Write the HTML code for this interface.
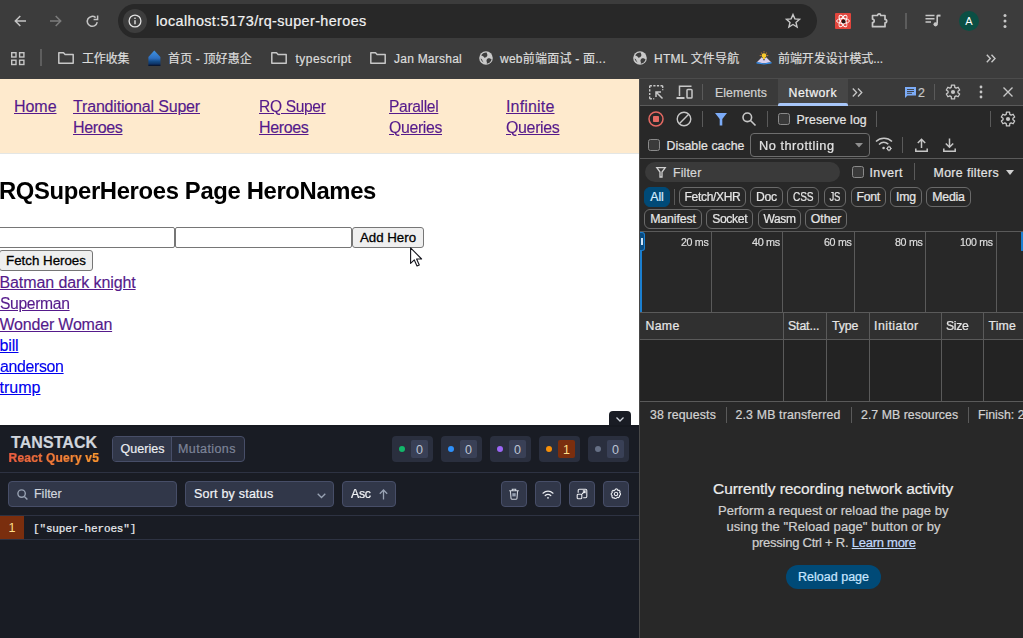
<!DOCTYPE html>
<html lang="en">
<head>
<meta charset="utf-8">
<title>rq-super-heroes</title>
<style>
*{box-sizing:border-box;margin:0;padding:0}
html,body{width:1023px;height:638px;overflow:hidden;background:#282828}
body{position:relative;font-family:"Liberation Sans","Noto Sans CJK SC",sans-serif;color:#e3e3e3}
.abs{position:absolute}
.t{position:absolute;white-space:nowrap;display:block}
svg{display:block;overflow:visible}

/* ---------- browser chrome ---------- */
#chrome{position:absolute;left:0;top:0;width:1023px;height:79px;background:#3c3c3c;z-index:3}
#urlpill{position:absolute;left:118px;top:4px;width:699px;height:34px;border-radius:17px;background:#282828}
#infocirc{position:absolute;left:5px;top:5px;width:24px;height:24px;border-radius:12px;background:#3d3d3d}
#url{left:38px;top:7px;font-size:14.4px;line-height:20px;color:#f2f2f2}
#avatar{position:absolute;left:959px;top:11px;width:20px;height:20px;border-radius:10px;background:#0b4f44;color:#fff;font-size:11px;line-height:20px;text-align:center}
.bm{font-size:12px;line-height:16px;top:51px;color:#dcdcdc;font-family:"Liberation Sans","Noto Sans CJK SC",sans-serif}

/* ---------- page ---------- */
#page{position:absolute;left:0;top:78px;width:639px;height:560px;background:#fff;color:#000;overflow:hidden}
#nav{position:absolute;left:0;top:0;width:639px;height:76px;background:#feeacd;border-bottom:1px solid #e4e6e4}
#nav a{position:absolute;font-size:16px;line-height:21px;color:#551a8b;text-decoration:underline;white-space:nowrap}
h2{position:absolute;left:-1px;top:97px;font-size:24px;line-height:32px;font-weight:bold;white-space:nowrap;color:#000}
.inp{position:absolute;top:149px;height:21px;border:1px solid #767676;border-radius:2px;background:#fff}
.btn{position:absolute;height:21px;border:1px solid #767676;border-radius:3px;background:#efefef;color:#000;font-size:13.3px;line-height:19px;text-align:center;white-space:nowrap;-webkit-text-stroke:0.3px #000}
#list a{position:absolute;left:-0.5px;font-size:16px;line-height:21px;text-decoration:underline;white-space:nowrap}
.v{color:#551a8b}.u{color:#0000ee}

/* ---------- tanstack ---------- */
#ts{position:absolute;left:0;top:425px;width:639px;height:213px;background:#191c24;border-top:2px solid #161920;font-family:"Liberation Sans",sans-serif}
#tsclose{position:absolute;left:609px;top:411px;width:22px;height:15px;background:#191c24;border-radius:4px 4px 0 0}

/* ---------- devtools ---------- */
#dt{position:absolute;left:640px;top:78px;width:383px;height:560px;background:#282828;color:#e3e3e3;font-size:12px;overflow:hidden}

#dt .sep{position:absolute;width:1px;background:#5a5a5a}
#dt .hl{position:absolute;left:0;width:383px;height:1px;background:#5a5a5a}
#dttabs{position:absolute;left:0;top:0;width:383px;height:27px;background:#3a3a3a}
#nettab{position:absolute;left:138px;top:1px;width:70px;height:27px;background:#464646;z-index:2}
#nettab:after{content:"";position:absolute;left:0;bottom:0;width:70px;height:3px;background:#a8c7fa;border-radius:2px 2px 0 0}
.dtt{font-size:12.3px;line-height:16px;color:#e3e3e3;margin-top:1px}
.cb{position:absolute;width:12px;height:12px;border:1.3px solid #8a8a8a;border-radius:2.5px;background:#3a3a3a}
.chip{position:absolute;height:20px;border:1px solid #6a6a6a;border-radius:6px;font-size:12.3px;line-height:19px;color:#e6e6e6;text-align:center;white-space:nowrap}
.chip span{display:inline-block}
.chip.on{background:#004a77;border-color:#004a77;color:#d6ecff}
.tl{font-size:11.3px;line-height:14px;color:#dedede;top:157px}
.gl{position:absolute;top:154px;width:1px;height:80px;background:#5a5a5a}
.th{font-size:12.3px;line-height:16px;color:#e6e6e6;top:240px}
.cd{position:absolute;top:235px;width:1px;height:88px;background:#5a5a5a}
.sb{font-size:12.3px;line-height:16px;color:#d2d2d2;top:329px}
.es{font-size:13px;line-height:16px;color:#cfcfcf}

#ts .hl{position:absolute;left:0;width:639px;height:1px;background:#2d3242}
.tsbox{position:absolute;background:#313749;border:1px solid #474e68;border-radius:4px}
.tstx{font-size:12.300px;line-height:16px;color:#d0d5dd}
.badge{position:absolute;top:9px;width:41px;height:26px;border-radius:4px;background:#2a2f3e}
.badge i{position:absolute;left:7px;top:10px;width:6px;height:6px;border-radius:50%}
.badge b{position:absolute;left:19px;top:4px;width:17px;height:18px;border-radius:2px;background:#394056;color:#bcc4d4;font-weight:normal;font-size:12.5px;line-height:20px;text-align:center}
.abtn{position:absolute;top:54px;width:26px;height:26px;background:#313749;border:1px solid #474e68;border-radius:4px}
.abtn svg{position:absolute;left:6px;top:6px}
/* weight */
#dt .t,#dt .chip,#reload{-webkit-text-stroke:0.22px currentColor}
#ts .t{-webkit-text-stroke:0.2px currentColor}
#tsR,#tsT,#tsK{-webkit-text-stroke:0}
.bm,#url{-webkit-text-stroke:0.2px currentColor}
#nav a,#list a{-webkit-text-stroke:0.15px currentColor}
</style>
<style id="fit">
#url{letter-spacing:0.380px}
#n1{letter-spacing:-0.047px}
#n2a{letter-spacing:-0.175px}
#n2b{letter-spacing:-0.346px}
#n3a{letter-spacing:-0.350px;transform:scaleX(0.9731);transform-origin:left center}
#n3b{letter-spacing:-0.346px}
#n4a{letter-spacing:-0.350px;transform:scaleX(0.9751);transform-origin:left center}
#n4b{letter-spacing:-0.350px;transform:scaleX(0.9892);transform-origin:left center}
#n5a{letter-spacing:0.170px}
#n5b{letter-spacing:-0.350px;transform:scaleX(0.9985);transform-origin:left center}
#h2{letter-spacing:-0.350px;transform:scaleX(0.9929);transform-origin:left center}
#l1{letter-spacing:-0.098px}
#l2{letter-spacing:-0.350px;transform:scaleX(0.9799);transform-origin:left center}
#l3{letter-spacing:-0.201px}
#l4{letter-spacing:-0.141px}
#l5{letter-spacing:-0.350px;transform:scaleX(0.9950);transform-origin:left center}
#l6{letter-spacing:0.019px}
#bm1{letter-spacing:-0.129px}
#bm2{letter-spacing:0.148px}
#bm3{letter-spacing:0.484px}
#bm4{letter-spacing:0.239px}
#bm5{letter-spacing:0.237px}
#bm6{letter-spacing:0.215px}
#bm7{letter-spacing:-0.092px}
#dElements{letter-spacing:0.092px}
#dNetwork{letter-spacing:0.499px}
#dPreserve{letter-spacing:0.104px}
#dDisable{letter-spacing:0.058px}
#dThrottle{letter-spacing:0.500px;transform:scaleX(1.0369);transform-origin:left center}
#dFilter{letter-spacing:0.179px}
#dInvert{letter-spacing:0.456px}
#dMore{letter-spacing:0.391px}
#d2{letter-spacing:-0.244px}
#c0{letter-spacing:-0.124px}
#c1{letter-spacing:-0.350px;transform:scaleX(0.9809);transform-origin:center center}
#c2{letter-spacing:-0.350px;transform:scaleX(0.9892);transform-origin:center center}
#c3{letter-spacing:-0.350px;transform:scaleX(0.8248);transform-origin:center center}
#c4{letter-spacing:-0.350px;transform:scaleX(0.7760);transform-origin:center center}
#c5{letter-spacing:-0.252px}
#c6{letter-spacing:-0.167px}
#c7{letter-spacing:-0.240px}
#c8{letter-spacing:-0.098px}
#c9{letter-spacing:-0.350px;transform:scaleX(0.9917);transform-origin:center center}
#c10{letter-spacing:-0.350px;transform:scaleX(0.9760);transform-origin:center center}
#c11{letter-spacing:-0.093px}
#t20{letter-spacing:-0.350px;transform:scaleX(0.9443);transform-origin:left center}
#t40{letter-spacing:-0.350px;transform:scaleX(0.9616);transform-origin:left center}
#t60{letter-spacing:-0.350px;transform:scaleX(0.9478);transform-origin:left center}
#t80{letter-spacing:-0.350px;transform:scaleX(0.9478);transform-origin:left center}
#t100{letter-spacing:-0.350px;transform:scaleX(0.9328);transform-origin:left center}
#s1{letter-spacing:0.158px}
#s2{letter-spacing:0.175px}
#s3{letter-spacing:0.045px}
#eh{letter-spacing:-0.055px}
#e1{letter-spacing:-0.003px}
#e2{letter-spacing:0.072px}
#e3{letter-spacing:-0.248px}
#rl{letter-spacing:0.027px}
#tsT{letter-spacing:0.072px}
#tsR{letter-spacing:0.236px}
#tsQ{letter-spacing:0.046px}
#tsM{letter-spacing:0.400px}
#tsF{letter-spacing:-0.014px}
#tsS{letter-spacing:0.212px}
#tsA{letter-spacing:-0.350px;transform:scaleX(0.9953);transform-origin:left center}
#tsK{letter-spacing:-0.152px}
#hName{letter-spacing:0.322px}
#hStat{letter-spacing:-0.118px}
#hType{letter-spacing:-0.143px}
#hInit{letter-spacing:0.486px}
#hSize{letter-spacing:-0.350px;transform:scaleX(0.9990);transform-origin:left center}
#hTime{letter-spacing:0.156px}
</style>
</head>
<body>

<!-- ================= BROWSER CHROME ================= -->
<div id="chrome">
  <div class="abs" style="left:639px;top:78px;width:384px;height:1px;background:#4c4c4c"></div>
  <!-- nav buttons -->
  <svg class="abs" style="left:14px;top:15px" width="12" height="12" viewBox="0 0 12 12" fill="none" stroke="#c4c4c4" stroke-width="1.5"><path d="M12 6H1.5M6.3 1L1.3 6l5 5"/></svg>
  <svg class="abs" style="left:50px;top:15px" width="12" height="12" viewBox="0 0 12 12" fill="none" stroke="#7c7c7c" stroke-width="1.5"><path d="M0 6h10.5M5.7 1l5 5-5 5"/></svg>
  <svg class="abs" style="left:86px;top:15px" width="13" height="13" viewBox="0 0 13 13" fill="none" stroke="#c4c4c4" stroke-width="1.5"><path d="M11.2 7.2A5 5 0 1 1 9.6 2.6"/><path d="M11.6 0.6v4h-4" stroke-linejoin="miter"/></svg>
  <div id="urlpill">
    <div id="infocirc">
      <svg class="abs" style="left:5px;top:5px" width="14" height="14" viewBox="0 0 14 14" fill="none" stroke="#e3e3e3" stroke-width="1.3"><circle cx="7" cy="7" r="5.9"/><path d="M7 6.2v4" stroke-width="1.4"/><circle cx="7" cy="4.2" r="0.5" fill="#e3e3e3" stroke-width="0.6"/></svg>
    </div>
    <span class="t" id="url">localhost:5173/rq-super-heroes</span>
    <!-- star -->
    <svg class="abs" style="left:667px;top:9px" width="16" height="16" viewBox="0 0 16 16" fill="none" stroke="#c7c7c7" stroke-width="1.4" stroke-linejoin="miter"><path d="M8 1.6l1.9 4.3 4.6.4-3.5 3.1 1.1 4.6L8 11.5 3.9 14l1.1-4.6L1.5 6.3l4.6-.4z"/></svg>
  </div>
  <!-- react devtools extension icon -->
  <div class="abs" style="left:835px;top:13px;width:16px;height:16px;background:#e2453c;border-radius:1px">
    <svg width="16" height="16" viewBox="0 0 16 16" fill="none" stroke="#fff" stroke-width="0.9"><ellipse cx="8" cy="8" rx="6.4" ry="2.5"/><ellipse cx="8" cy="8" rx="6.4" ry="2.5" transform="rotate(60 8 8)"/><ellipse cx="8" cy="8" rx="6.4" ry="2.5" transform="rotate(120 8 8)"/><circle cx="8.6" cy="8.6" r="2" fill="#2a1513" stroke="none"/></svg>
  </div>
  <!-- puzzle -->
  <svg class="abs" style="left:871px;top:11px" width="18" height="17" viewBox="0 0 18 17" fill="none" stroke="#c7c7c7" stroke-width="1.7" stroke-linejoin="round"><path d="M1.500 4.500h5a1.600 1.600 0 0 1 3.200 0h4.300v3.900a1.700 1.700 0 0 1 0 3.400v3.900H1.500v-4.200a1.700 1.700 0 0 0 0-3.400z"/></svg>
  <div class="abs" style="left:905px;top:13px;width:2px;height:16px;background:#5c5c5c"></div>
  <!-- media control -->
  <svg class="abs" style="left:925px;top:14px" width="16" height="14" viewBox="0 0 16 14" fill="none" stroke="#c7c7c7" stroke-width="1.5"><path d="M0.5 1.5h9M0.5 4.8h9M0.5 8.1h5.5"/><path d="M12.2 1.2v8.6" stroke-width="1.6"/><path d="M12.2 1.6h3.3" stroke-width="2"/><circle cx="10.6" cy="10.3" r="2.1" fill="#c7c7c7" stroke="none"/></svg>
  <div id="avatar">A</div>
  <!-- kebab -->
  <svg class="abs" style="left:1003px;top:13px" width="4" height="16" viewBox="0 0 4 16" fill="#c7c7c7"><circle cx="2" cy="2.5" r="1.5"/><circle cx="2" cy="8" r="1.5"/><circle cx="2" cy="13.5" r="1.5"/></svg>

  <!-- bookmarks bar -->
  <svg class="abs" style="left:11px;top:52px" width="14" height="14" viewBox="0 0 14 14" fill="none" stroke="#c7c7c7" stroke-width="1.4"><rect x="0.7" y="0.7" width="4.3" height="4.3"/><rect x="8.6" y="0.7" width="4.3" height="4.3"/><rect x="0.7" y="8.2" width="4.3" height="4.3"/><rect x="8.6" y="8.2" width="4.3" height="4.3"/></svg>
  <div class="abs" style="left:40px;top:49px;width:1.5px;height:17px;background:#5e5e5e"></div>
  <svg class="abs folder" style="left:58px;top:52px" width="16" height="12" viewBox="0 0 16 12" fill="none" stroke="#c7c7c7" stroke-width="1.5" stroke-linejoin="round"><path d="M0.8 0.8h4.7l1.6 1.7h8.1v8.7H0.8z"/></svg>
  <span class="t bm" id="bm1" style="left:82px">工作收集</span>
  <svg class="abs" style="left:148px;top:50px" width="13" height="16" viewBox="0 0 13 16"><defs><linearGradient id="gHouse" x1="0" y1="0" x2="0" y2="1"><stop offset="0" stop-color="#3f93e3"/><stop offset="0.5" stop-color="#2e6fc0"/><stop offset="0.72" stop-color="#134a86"/><stop offset="1" stop-color="#0a2350"/></linearGradient></defs><path d="M6.300 0.600L12.400 7v8.800H0.400V7z" fill="url(#gHouse)"/><path d="M0.400 14.800h12v1h-12z" fill="#07142e"/></svg>
  <span class="t bm" id="bm2" style="left:168px">首页 - 顶好惠企</span>
  <svg class="abs folder" style="left:271px;top:52px" width="16" height="12" viewBox="0 0 16 12" fill="none" stroke="#c7c7c7" stroke-width="1.5" stroke-linejoin="round"><path d="M0.8 0.8h4.7l1.6 1.7h8.1v8.7H0.8z"/></svg>
  <span class="t bm" id="bm3" style="left:295.5px">typescript</span>
  <svg class="abs folder" style="left:370px;top:52px" width="16" height="12" viewBox="0 0 16 12" fill="none" stroke="#c7c7c7" stroke-width="1.5" stroke-linejoin="round"><path d="M0.8 0.8h4.7l1.6 1.7h8.1v8.7H0.8z"/></svg>
  <span class="t bm" id="bm4" style="left:394px">Jan Marshal</span>
  <svg class="abs globe" style="left:479px;top:51px" width="14" height="14" viewBox="0 0 14 14"><circle cx="7" cy="7" r="6.800" fill="#c9c9c9"/><path d="M7.600 1.500C5.400 1.300 3.200 2.600 2.200 4.600c1.400.2 2.500.9 3.100 2.100 1.200-.1 2.600-.7 3-2 .4-1.200-.5-2.100-.7-3.200z" fill="#3c3c3c"/><path d="M8.700 7.400c-1.100.8-1.500 2.100-1 3.300.4 1 .2 1.600-.1 2 2.400-.2 4.400-1.900 5-4.200-1.100-.9-2.600-1.600-3.900-1.100z" fill="#3c3c3c"/><path d="M1.600 7.600c.8.300 1.600 1 1.800 2 .2.800.9 1.200 1.300 1.900-1.600-.7-2.800-2.100-3.100-3.900z" fill="#3c3c3c"/></svg>
  <span class="t bm" id="bm5" style="left:500px">web前端面试 - 面...</span>
  <svg class="abs globe" style="left:633px;top:51px" width="14" height="14" viewBox="0 0 14 14"><circle cx="7" cy="7" r="6.800" fill="#c9c9c9"/><path d="M7.600 1.500C5.400 1.300 3.200 2.600 2.200 4.600c1.400.2 2.500.9 3.100 2.100 1.200-.1 2.600-.7 3-2 .4-1.200-.5-2.100-.7-3.200z" fill="#3c3c3c"/><path d="M8.700 7.400c-1.100.8-1.500 2.100-1 3.300.4 1 .2 1.600-.1 2 2.400-.2 4.400-1.900 5-4.200-1.100-.9-2.600-1.600-3.900-1.100z" fill="#3c3c3c"/><path d="M1.600 7.600c.8.300 1.600 1 1.800 2 .2.800.9 1.200 1.300 1.900-1.600-.7-2.800-2.100-3.100-3.900z" fill="#3c3c3c"/></svg>
  <span class="t bm" id="bm6" style="left:654px">HTML 文件导航</span>
  <svg class="abs" style="left:756px;top:51px" width="16" height="14" viewBox="0 0 16 14"><g fill="#e8842c"><circle cx="5.500" cy="2" r="0.600"/><circle cx="8" cy="0.800" r="0.600"/><circle cx="10.500" cy="2" r="0.600"/><circle cx="4.300" cy="4.600" r="0.600"/><circle cx="11.700" cy="4.600" r="0.600"/></g><path d="M0.800 11.200L5.800 6.300 8 8.500l2.200-2.200 5 4.900L8 12.300z" fill="#d9d0ee"/><path d="M0.500 11l7.500 1.400L15.500 11v1.600L8 13.600 0.500 12.600z" fill="#2f8df0"/><circle cx="8" cy="4.600" r="2.400" fill="#f9c92c"/><path d="M7 6.500h2v2H7z" fill="#f9c92c"/><path d="M7.200 8.300h1.600v1H7.200z" fill="#3a3f55"/></svg>
  <span class="t bm" id="bm7" style="left:778px">前端开发设计模式...</span>
  <svg class="abs" style="left:986px;top:54px" width="10" height="9" viewBox="0 0 10 9" fill="none" stroke="#c7c7c7" stroke-width="1.4"><path d="M0.800 0.800l3.500 3.700-3.500 3.700M5.500 0.800L9 4.500 5.500 8.200"/></svg>
</div>

<!-- ================= PAGE ================= -->
<div id="page">
  <div id="nav">
    <a style="left:14px;top:18px" id="n1">Home</a>
    <a style="left:73px;top:18px" id="n2a">Tranditional Super</a>
    <a style="left:73px;top:39px" id="n2b">Heroes</a>
    <a style="left:259px;top:18px" id="n3a">RQ Super</a>
    <a style="left:259px;top:39px" id="n3b">Heroes</a>
    <a style="left:389px;top:18px" id="n4a">Parallel</a>
    <a style="left:389px;top:39px" id="n4b">Queries</a>
    <a style="left:506px;top:18px" id="n5a">Infinite</a>
    <a style="left:506px;top:39px" id="n5b">Queries</a>
  </div>
  <h2 id="h2">RQSuperHeroes Page HeroNames</h2>
  <div class="inp" style="left:-2px;width:177px"></div>
  <div class="inp" style="left:175px;width:177px"></div>
  <div class="btn" id="b1" style="left:352px;top:149px;width:72px">Add Hero</div>
  <div class="btn" id="b2" style="left:-1px;top:172px;width:94px">Fetch Heroes</div>
  <svg class="abs" id="cursor" style="left:410px;top:169px" width="13" height="20" viewBox="0 0 13 20"><path d="M0.600 0.800v15.600l3.700-3.500 2.700 6 2.300-1-2.700-5.900h5z" fill="#fff" stroke="#14141c" stroke-width="1.100" stroke-linejoin="round"/></svg>
  <div id="list">
    <a class="v" id="l1" style="top:194px">Batman dark knight</a>
    <a class="v" id="l2" style="top:215px">Superman</a>
    <a class="v" id="l3" style="top:236px">Wonder Woman</a>
    <a class="u" id="l4" style="top:257px">bill</a>
    <a class="u" id="l5" style="top:278px">anderson</a>
    <a class="u" id="l6" style="top:299px">trump</a>
  </div>
</div>

<!-- ================= TANSTACK DEVTOOLS ================= -->
<div id="tsclose"><svg class="abs" style="left:7px;top:6px" width="8" height="5" viewBox="0 0 8 5" fill="none" stroke="#d0d5dd" stroke-width="1.300"><path d="M0.500 0.500l3.500 3.500L7.500 0.500"/></svg></div>
<div id="ts">
  <span class="t" id="tsT" style="left:11px;top:7px;font-size:16px;line-height:18px;font-weight:bold;color:#d0d5dd">TANSTACK</span>
  <span class="t" id="tsR" style="left:8.500px;top:24px;font-size:12px;line-height:14px;font-weight:bold;color:#f36a25;background:linear-gradient(90deg,#ea5a45,#f7a030);-webkit-background-clip:text;background-clip:text;-webkit-text-fill-color:transparent">React Query v5</span>
  <!-- view toggle -->
  <div class="abs" style="left:112px;top:9px;width:133px;height:26px;border:1px solid #474e68;border-radius:4px;background:#272b39;overflow:hidden">
    <div class="abs" style="left:0;top:0;width:59px;height:24px;background:#313749;border-right:1px solid #474e68"></div>
  </div>
  <span class="t tstx" id="tsQ" style="left:120.500px;top:13.500px;font-size:12.500px;color:#eaecf0">Queries</span>
  <span class="t tstx" id="tsM" style="left:178px;top:13.500px;font-size:12.500px;color:#7d8498">Mutations</span>
  <!-- status badges -->
  <div class="badge" style="left:392px"><i style="background:#12b76a"></i><b>0</b></div>
  <div class="badge" style="left:441px"><i style="background:#2e90fa"></i><b>0</b></div>
  <div class="badge" style="left:490px"><i style="background:#9b66f5"></i><b>0</b></div>
  <div class="badge" style="left:539px"><i style="background:#f79009"></i><b style="background:#7a2e0e;color:#fedf89">1</b></div>
  <div class="badge" style="left:588px"><i style="background:#667085"></i><b>0</b></div>
  <div class="hl" style="top:45px"></div>

  <!-- filter row -->
  <div class="tsbox" style="left:8px;top:54px;width:169px;height:26px"></div>
  <svg class="abs" style="left:17px;top:62px" width="11" height="11" viewBox="0 0 11 11" fill="none" stroke="#98a2b3" stroke-width="1.400"><circle cx="4.600" cy="4.600" r="3.700"/><path d="M7.400 7.400l3 3"/></svg>
  <span class="t tstx" id="tsF" style="left:34px;top:59px;font-size:12.500px;color:#d0d5dd">Filter</span>
  <div class="tsbox" style="left:185px;top:54px;width:149px;height:26px"></div>
  <span class="t tstx" id="tsS" style="left:194px;top:59px;font-size:12.500px;color:#f2f4f7">Sort by status</span>
  <svg class="abs" style="left:316.500px;top:65.500px" width="9" height="6" viewBox="0 0 9 6" fill="none" stroke="#98a2b3" stroke-width="1.300"><path d="M0.700 0.700l3.800 3.800L8.300 0.700"/></svg>
  <div class="tsbox" style="left:342px;top:54px;width:54px;height:26px"></div>
  <span class="t tstx" id="tsA" style="left:351px;top:59px;font-size:12.500px;color:#f2f4f7">Asc</span>
  <svg class="abs" style="left:378.500px;top:62px" width="9" height="11" viewBox="0 0 9 11" fill="none" stroke="#98a2b3" stroke-width="1.300"><path d="M4.500 10.500V1M0.800 4.700L4.500 1l3.700 3.700"/></svg>
  <!-- action buttons -->
  <div class="abtn" style="left:501px"><svg width="12" height="12" viewBox="0 0 12 12" fill="none" stroke="#d0d5dd" stroke-width="1.100"><path d="M1.200 2.800h9.600M4.300 2.600V1.300h3.400v1.300M2.400 3l.6 7.300c0 .5.400.9.900.9h4.200c.5 0 .9-.4.900-.9L9.600 3"/><path d="M4.300 5.200h3.400v3.200H4.300z" fill="#98a2b3" stroke="none"/></svg></div>
  <div class="abtn" style="left:535px"><svg width="12" height="12" viewBox="0 0 12 12" fill="none" stroke="#eaecf0" stroke-width="1.2" stroke-linecap="round"><path d="M1 5.200c2.900-2.700 7.100-2.700 10 0"/><path d="M3.200 7.500c1.700-1.500 3.900-1.500 5.600 0"/><circle cx="6" cy="9.800" r="0.900" fill="#eaecf0" stroke="none"/></svg></div>
  <div class="abtn" style="left:569px"><svg width="12" height="12" viewBox="0 0 12 12" fill="none" stroke="#eaecf0" stroke-width="1.1"><path d="M2.200 4.800V2.400c0-.7.500-1.200 1.200-1.200h6.200c.7 0 1.200.5 1.200 1.200v6.200c0 .7-.5 1.200-1.200 1.200H7.200"/><rect x="1.200" y="6.200" width="4.600" height="4.600" rx="0.900"/><path d="M6 6l3-3M6.800 2.900h2.300v2.300"/></svg></div>
  <div class="abtn" style="left:603px"><svg width="12" height="12" viewBox="0 0 12 12" fill="none" stroke="#eaecf0" stroke-width="1.100"><path d="M6 0.800l1.400.5.500 1.100 1.200-.2 1 1.100-.5 1.100.8 1 .1 1.300-1 .7v1.200l-1 1-1.200-.3-.9.900-1.400.3-1-.8-1.200.2-.9-1 .3-1.200-.9-.9V5.400l1-.8-.3-1.200 1-1 1.200.3z" stroke-linejoin="round"/><circle cx="6" cy="6" r="1.700"/></svg></div>
  <div class="hl" style="top:88px"></div>

  <!-- query row -->
  <div class="abs" style="left:0;top:89px;width:24px;height:23px;background:#7a2e0e;color:#fedf89;font-size:12.500px;line-height:25px;text-align:center">1</div>
  <span class="t" id="tsK" style="left:33px;top:94px;font-family:'Liberation Mono','DejaVu Sans Mono',monospace;font-size:11px;line-height:16px;color:#eaecf0">["super-heroes"]</span>
  <div class="hl" style="top:112px"></div>
</div>

<!-- ================= CHROME DEVTOOLS ================= -->
<div class="abs" id="dtborder" style="left:639px;top:78px;width:1px;height:560px;background:#484848"></div>
<div id="dt">
  <div id="dttabs">
    <!-- inspect -->
    <svg class="abs" style="left:9px;top:7px" width="15" height="15" viewBox="0 0 15 15" fill="none" stroke="#c7c7c7" stroke-width="1.4"><path d="M0.700 0.700h13" stroke-dasharray="2.200 1.400"/><path d="M0.700 0.700v13" stroke-dasharray="2.200 1.400"/><path d="M13.700 0.700v4.500" stroke-dasharray="2.200 1.400"/><path d="M0.700 13.700h4.500" stroke-dasharray="2.200 1.400"/><path d="M7 7l6.500 6.500M7 12V7h5" stroke-width="1.500"/></svg>
    <!-- device -->
    <svg class="abs" style="left:36px;top:7px" width="17" height="15" viewBox="0 0 17 15" fill="none" stroke="#c7c7c7" stroke-width="1.500"><path d="M3.500 11V1.200h12"/><path d="M0.500 13h8" stroke-width="2"/><rect x="11" y="4.500" width="5" height="8.500" rx="0.800"/></svg>
    <div class="sep" style="left:62px;top:6px;height:16px"></div>
    <span class="t dtt" id="dElements" style="left:75px;top:6px;color:#d0d0d0">Elements</span>
    <div id="nettab"></div>
    <span class="t dtt" id="dNetwork" style="left:148.500px;top:6px;color:#f2f2f2;z-index:3">Network</span>
    <svg class="abs" style="left:212px;top:10px" width="11" height="9" viewBox="0 0 11 9" fill="none" stroke="#c7c7c7" stroke-width="1.300"><path d="M0.800 0.500l3.800 4-3.800 4M6 0.500l3.800 4L6 8.500"/></svg>
    <!-- comment icon -->
    <svg class="abs" style="left:265px;top:9px" width="11" height="11" viewBox="0 0 11 11"><path d="M0 0h11v8.500H2.500L0 11z" fill="#7cacf8"/><path d="M2 2.500h7M2 4.500h7M2 6.300h5" stroke="#3a3a3a" stroke-width="0.900"/></svg>
    <span class="t dtt" id="d2" style="left:278px;top:6px;color:#c7c7c7">2</span>
    <div class="sep" style="left:294px;top:6px;height:16px"></div>
    <svg class="abs" style="left:305px;top:6px" width="16" height="16" viewBox="0 0 16 16" fill="none" stroke="#c7c7c7" stroke-width="1.3"><path d="M9.79 3.33L9.57 1.18L6.43 1.18L6.21 3.33L4.85 4.11L2.88 3.23L1.31 5.95L3.06 7.22L3.06 8.78L1.31 10.05L2.88 12.77L4.85 11.89L6.21 12.67L6.43 14.82L9.57 14.82L9.79 12.67L11.15 11.89L13.12 12.77L14.69 10.05L12.94 8.78L12.94 7.22L14.69 5.95L13.12 3.23L11.15 4.11z" stroke-linejoin="round"/><circle cx="8" cy="8" r="2.1" fill="#c7c7c7" stroke="none"/></svg>
    <svg class="abs" style="left:339px;top:7px" width="4" height="14" viewBox="0 0 4 14" fill="#c7c7c7"><circle cx="2" cy="2" r="1.400"/><circle cx="2" cy="7" r="1.400"/><circle cx="2" cy="12" r="1.400"/></svg>
    <svg class="abs" style="left:363px;top:9px" width="10" height="10" viewBox="0 0 10 10" fill="none" stroke="#c7c7c7" stroke-width="1.400"><path d="M0.500 0.500l9 9M9.500 0.500l-9 9"/></svg>
  </div>
  <div class="hl" style="top:27px"></div>

  <!-- toolbar row 1 -->
  <svg class="abs" style="left:8px;top:33px" width="16" height="16" viewBox="0 0 16 16"><circle cx="8" cy="8" r="7" fill="none" stroke="#e46962" stroke-width="1.500"/><rect x="5" y="5" width="6" height="6" rx="0.800" fill="#e46962"/></svg>
  <svg class="abs" style="left:36px;top:33px" width="16" height="16" viewBox="0 0 16 16" fill="none" stroke="#c7c7c7" stroke-width="1.400"><circle cx="8" cy="8" r="6.800"/><path d="M3.300 12.700l9.400-9.400"/></svg>
  <div class="sep" style="left:62px;top:33px;height:16px"></div>
  <svg class="abs" style="left:75px;top:35px" width="12" height="13" viewBox="0 0 12 13"><path d="M0 0h12L7.300 6v6.500H4.700V6z" fill="#7cacf8"/></svg>
  <svg class="abs" style="left:102px;top:34px" width="14" height="14" viewBox="0 0 14 14" fill="none" stroke="#c7c7c7" stroke-width="1.600"><circle cx="5.300" cy="5.300" r="4.300"/><path d="M8.500 8.500l5 5"/></svg>
  <div class="sep" style="left:127px;top:33px;height:16px"></div>
  <div class="cb" style="left:138px;top:35px"></div>
  <span class="t dtt" id="dPreserve" style="left:156.500px;top:33px">Preserve log</span>
  <div class="sep" style="left:236px;top:33px;height:16px"></div>
  <div class="sep" style="left:350px;top:33px;height:16px"></div>
  <svg class="abs" style="left:360px;top:33px" width="16" height="16" viewBox="0 0 16 16" fill="none" stroke="#c7c7c7" stroke-width="1.3"><path d="M9.79 3.33L9.57 1.18L6.43 1.18L6.21 3.33L4.85 4.11L2.88 3.23L1.31 5.95L3.06 7.22L3.06 8.78L1.31 10.05L2.88 12.77L4.85 11.89L6.21 12.67L6.43 14.82L9.57 14.82L9.79 12.67L11.15 11.89L13.12 12.77L14.69 10.05L12.94 8.78L12.94 7.22L14.69 5.95L13.12 3.23L11.15 4.11z" stroke-linejoin="round"/><circle cx="8" cy="8" r="2.1" fill="#c7c7c7" stroke="none"/></svg>

  <!-- toolbar row 2 -->
  <div class="cb" style="left:8px;top:61px"></div>
  <span class="t dtt" id="dDisable" style="left:26.500px;top:59px">Disable cache</span>
  <div class="abs" style="left:110px;top:55px;width:120px;height:24px;border:1px solid #6e6e6e;border-radius:4px"></div>
  <span class="t dtt" id="dThrottle" style="left:118.500px;top:59px">No throttling</span>
  <svg class="abs" style="left:215px;top:65px" width="8" height="5" viewBox="0 0 8 5"><path d="M0 0h8L4 4.500z" fill="#8f8f8f"/></svg>
  <!-- wifi + gear -->
  <svg class="abs" style="left:235px;top:58px" width="18" height="16" viewBox="0 0 18 16" fill="none" stroke="#c7c7c7" stroke-width="1.500"><path d="M1 5.500C5.500 1.200 12.500 1.200 17 5.500"/><path d="M4 8.500c2.800-2.600 6.500-2.600 9.300-.3"/><circle cx="8.600" cy="12" r="1.300" fill="#c7c7c7" stroke="none"/><circle cx="14" cy="12.500" r="1.700" stroke-width="1.300"/><path d="M14 9.700v1M14 14.300v1M11.300 12.500h1M15.700 12.500h1" stroke-width="1.200"/></svg>
  <div class="sep" style="left:262px;top:59px;height:16px"></div>
  <svg class="abs" style="left:275px;top:60px" width="13" height="14" viewBox="0 0 13 14" fill="none" stroke="#c7c7c7" stroke-width="1.500"><path d="M6.500 10V1.500M2.800 5l3.700-3.700L10.200 5M0.800 10.500v2.700h11.400v-2.700"/></svg>
  <svg class="abs" style="left:303px;top:60px" width="13" height="14" viewBox="0 0 13 14" fill="none" stroke="#c7c7c7" stroke-width="1.500"><path d="M6.500 0.500V9M2.800 5.500l3.700 3.700 3.700-3.700M0.800 10.500v2.700h11.400v-2.700"/></svg>
  <div class="hl" style="top:80px"></div>

  <!-- filter row -->
  <div class="abs" style="left:5px;top:84px;width:195px;height:20px;border-radius:10px;background:#3a3a3a"></div>
  <svg class="abs" style="left:16px;top:89px" width="10" height="11" viewBox="0 0 10 11" fill="none" stroke="#d0d0d0" stroke-width="1.300"><path d="M0.800 0.700h8.400L6 5v5H4V5z"/></svg>
  <span class="t dtt" id="dFilter" style="left:33px;top:86px;color:#d6d6d6">Filter</span>
  <div class="cb" style="left:212px;top:88px"></div>
  <span class="t dtt" id="dInvert" style="left:229.500px;top:86px">Invert</span>
  <div class="sep" style="left:274px;top:85px;height:17px"></div>
  <span class="t dtt" id="dMore" style="left:293.500px;top:86px">More filters</span>
  <svg class="abs" style="left:366px;top:92px" width="8" height="5" viewBox="0 0 8 5"><path d="M0 0h8L4 5z" fill="#d0d0d0"/></svg>

  <!-- type chips -->
  <div class="chip on" style="left:4px;top:109px;width:26px"><span id="c0">All</span></div>
  <div class="sep" style="left:34px;top:111px;height:16px"></div>
  <div class="chip" style="left:39px;top:109px;width:67px"><span id="c1">Fetch/XHR</span></div>
  <div class="chip" style="left:110px;top:109px;width:33px"><span id="c2">Doc</span></div>
  <div class="chip" style="left:147px;top:109px;width:32px"><span id="c3">CSS</span></div>
  <div class="chip" style="left:183.5px;top:109px;width:22.5px"><span id="c4">JS</span></div>
  <div class="chip" style="left:210.5px;top:109px;width:35.5px"><span id="c5">Font</span></div>
  <div class="chip" style="left:250px;top:109px;width:32px"><span id="c6">Img</span></div>
  <div class="chip" style="left:286px;top:109px;width:45px"><span id="c7">Media</span></div>
  <div class="chip" style="left:4px;top:131px;width:58px"><span id="c8">Manifest</span></div>
  <div class="chip" style="left:66px;top:131px;width:47px"><span id="c9">Socket</span></div>
  <div class="chip" style="left:117.5px;top:131px;width:43px"><span id="c10">Wasm</span></div>
  <div class="chip" style="left:165px;top:131px;width:42px"><span id="c11">Other</span></div>
  <div class="hl" style="top:153px"></div>

  <!-- timeline overview -->
  <div class="abs" style="left:0;top:154px;width:2px;height:80px;background:#1b7fd0"></div>
  <div class="abs" style="left:0;top:154px;width:5px;height:19px;background:#0a4c80;border:1px solid #1b7fd0;border-left:0;border-radius:0 3px 3px 0"></div>
  <div class="abs" style="left:1px;top:160px;width:1.500px;height:7px;background:#d3e6f8"></div>
  <div class="abs" style="left:381px;top:154px;width:2px;height:19px;background:#1b7fd0"></div>
  <div class="gl" style="left:71px"></div><div class="gl" style="left:142px"></div><div class="gl" style="left:214px"></div><div class="gl" style="left:285px"></div><div class="gl" style="left:356px"></div>
  <span class="t tl" id="t20" style="left:41px">20 ms</span>
  <span class="t tl" id="t40" style="left:112px">40 ms</span>
  <span class="t tl" id="t60" style="left:183.500px">60 ms</span>
  <span class="t tl" id="t80" style="left:254.500px">80 ms</span>
  <span class="t tl" id="t100" style="left:320px">100 ms</span>
  <div class="hl" style="top:234px"></div>

  <!-- request table -->
  <div class="abs" style="left:0;top:235px;width:383px;height:26px;background:#303030"></div>
  <div class="abs" style="left:0;top:262px;width:383px;height:61px;background:#232323"></div>
  <div class="hl" style="top:261px"></div>
  <div class="hl" style="top:323px"></div>
  <div class="cd" style="left:143px"></div><div class="cd" style="left:186px"></div><div class="cd" style="left:229px"></div><div class="cd" style="left:301px"></div><div class="cd" style="left:343px"></div>
  <span class="t th" id="hName" style="left:5.500px">Name</span>
  <span class="t th" id="hStat" style="left:148px">Stat...</span>
  <span class="t th" id="hType" style="left:192px">Type</span>
  <span class="t th" id="hInit" style="left:234px">Initiator</span>
  <span class="t th" id="hSize" style="left:306px">Size</span>
  <span class="t th" id="hTime" style="left:348.500px">Time</span>

  <!-- status bar -->
  <span class="t sb" id="s1" style="left:10px">38 requests</span>
  <div class="sep" style="left:85.500px;top:329px;height:16px"></div>
  <span class="t sb" id="s2" style="left:95.500px">2.3 MB transferred</span>
  <div class="sep" style="left:211px;top:329px;height:16px"></div>
  <span class="t sb" id="s3" style="left:221px">2.7 MB resources</span>
  <div class="sep" style="left:328px;top:329px;height:16px"></div>
  <span class="t sb" id="s4" style="left:338px">Finish: 2.50 s</span>

  <!-- empty state -->
  <span class="t" id="eh" style="left:73px;top:401px;font-size:15.500px;line-height:20px;color:#ececec">Currently recording network activity</span>
  <span class="t es" id="e1" style="left:78px;top:425px">Perform a request or reload the page by</span>
  <span class="t es" id="e2" style="left:86.500px;top:441px">using the "Reload page" button or by</span>
  <span class="t es" id="e3" style="left:112px;top:457px">pressing Ctrl + R. <u id="elm" style="color:#c2d9fc">Learn more</u></span>
  <div class="abs" id="reload" style="left:146px;top:487px;width:95px;height:24px;border-radius:12px;background:#004a77;color:#c8e6ff;font-size:12.500px;line-height:24px;text-align:center;white-space:nowrap"><span id="rl" style="display:inline-block">Reload page</span></div>
</div>

</body>
</html>
